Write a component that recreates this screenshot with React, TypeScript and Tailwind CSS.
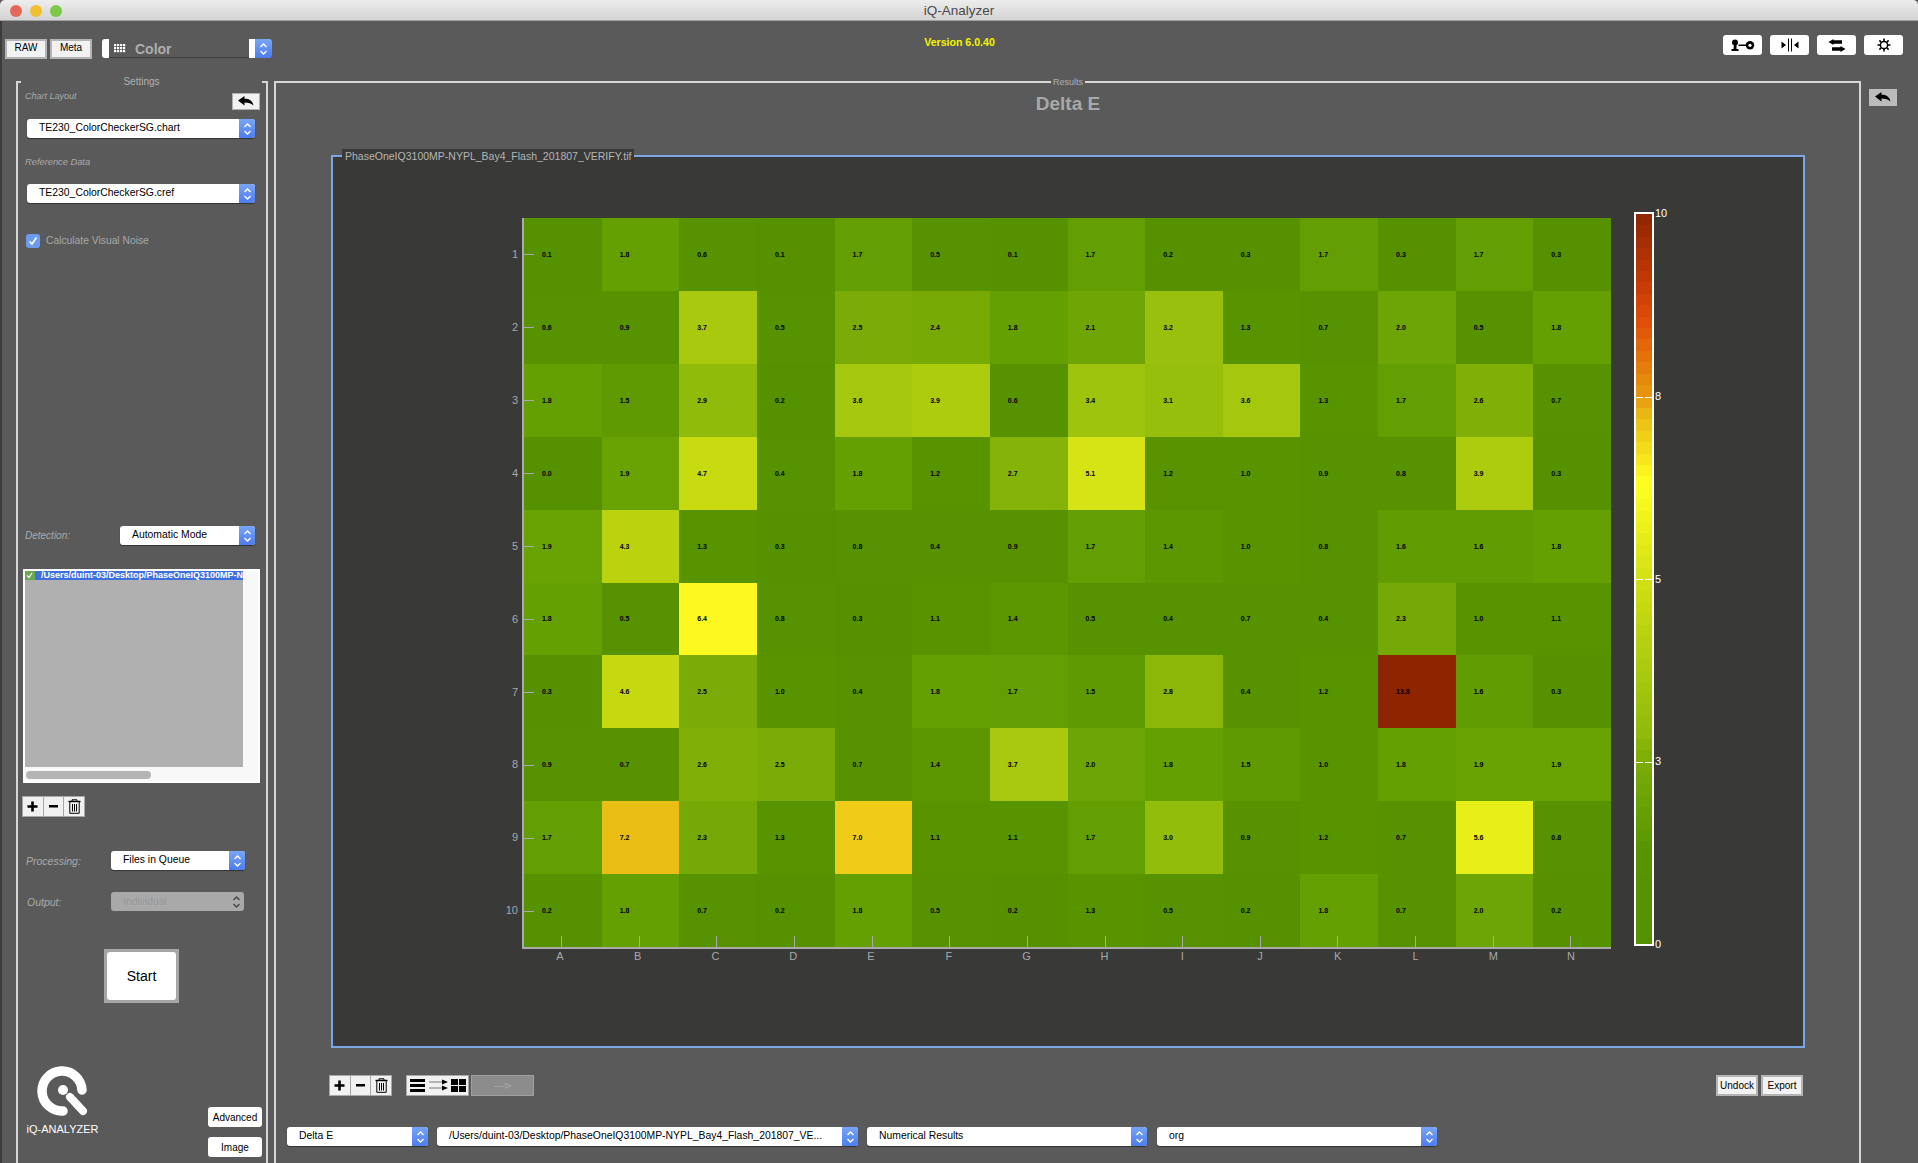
import type { ReactNode } from "react"

const COLS = ["A", "B", "C", "D", "E", "F", "G", "H", "I", "J", "K", "L", "M", "N"]

const DATA = [
  [0.1, 1.8, 0.6, 0.1, 1.7, 0.5, 0.1, 1.7, 0.2, 0.3, 1.7, 0.3, 1.7, 0.3],
  [0.6, 0.9, 3.7, 0.5, 2.5, 2.4, 1.8, 2.1, 3.2, 1.3, 0.7, 2.0, 0.5, 1.8],
  [1.8, 1.5, 2.9, 0.2, 3.6, 3.9, 0.6, 3.4, 3.1, 3.6, 1.3, 1.7, 2.6, 0.7],
  [0.0, 1.9, 4.7, 0.4, 1.8, 1.2, 2.7, 5.1, 1.2, 1.0, 0.9, 0.8, 3.9, 0.3],
  [1.9, 4.3, 1.3, 0.3, 0.8, 0.4, 0.9, 1.7, 1.4, 1.0, 0.8, 1.6, 1.6, 1.8],
  [1.8, 0.5, 6.4, 0.8, 0.3, 1.1, 1.4, 0.5, 0.4, 0.7, 0.4, 2.3, 1.0, 1.1],
  [0.3, 4.6, 2.5, 1.0, 0.4, 1.8, 1.7, 1.5, 2.8, 0.4, 1.2, 13.8, 1.6, 0.3],
  [0.9, 0.7, 2.6, 2.5, 0.7, 1.4, 3.7, 2.0, 1.8, 1.5, 1.0, 1.8, 1.9, 1.9],
  [1.7, 7.2, 2.3, 1.3, 7.0, 1.1, 1.1, 1.7, 3.0, 0.9, 1.2, 0.7, 5.6, 0.8],
  [0.2, 1.8, 0.7, 0.2, 1.8, 0.5, 0.2, 1.3, 0.5, 0.2, 1.8, 0.7, 2.0, 0.2],
]

const STOPS: [number, number, number, number][] = [
  [0, 0x56, 0x92, 0x00],
  [1.3, 0x58, 0x94, 0x00],
  [1.5, 0x5f, 0x9a, 0x02],
  [1.8, 0x65, 0xa0, 0x02],
  [2.0, 0x6c, 0xa5, 0x05],
  [2.5, 0x7b, 0xab, 0x06],
  [2.9, 0x90, 0xbb, 0x0a],
  [3.7, 0xa8, 0xc9, 0x0e],
  [4.7, 0xc8, 0xda, 0x10],
  [5.6, 0xe7, 0xee, 0x18],
  [6.3, 0xff, 0xff, 0x20],
  [7.2, 0xeb, 0xbe, 0x14],
  [7.5, 0xe7, 0x9a, 0x0f],
  [8.5, 0xe0, 0x50, 0x08],
  [9, 0xc8, 0x3c, 0x04],
  [10, 0x8f, 0x25, 0x00],
]

// same ramp for the cells and the legend
function heatColor(v: number) {
  const val = Math.min(v, 10)
  for (let i = 1; i < STOPS.length; i++) {
    const a = STOPS[i - 1]
    const b = STOPS[i]
    if (val <= b[0]) {
      const t = (val - a[0]) / (b[0] - a[0])
      const mix = (k: number) => Math.round(a[k] + (b[k] - a[k]) * t)
      return `rgb(${mix(1)},${mix(2)},${mix(3)})`
    }
  }
  return "rgb(143,37,0)"
}

const BANDS = Array.from({ length: 64 }, (_, i) => 10 - (i + 0.5) * (10 / 64))

function Chevrons({ color = "white" }: { color?: string }) {
  return (
    <svg width="9" height="14" viewBox="0 0 9 14" fill="none" stroke={color} strokeWidth="1.4">
      <path d="M1.5 5 L4.5 2 L7.5 5" />
      <path d="M1.5 9 L4.5 12 L7.5 9" />
    </svg>
  )
}

function Select({ label, className }: { label: string; className: string }) {
  return (
    <div className={`flex h-[19px] items-stretch rounded-[3px] bg-white shadow-[0_1px_1px_#333] ${className}`}>
      <div className="min-w-0 flex-1 whitespace-nowrap pl-3 text-[10.4px] leading-[17px] text-black">{label}</div>
      <div className="flex w-[16px] shrink-0 items-center justify-center rounded-r-[3px] bg-gradient-to-b from-[#79a5f7] to-[#4c7cf0]">
        <Chevrons />
      </div>
    </div>
  )
}

function BackArrow({ className }: { className: string }) {
  return (
    <div className={`flex items-center justify-center ${className}`}>
      <svg width="16" height="11" viewBox="0 0 16 11" fill="black">
        <path d="M0 4.5 L6.5 0 L6.5 2.8 C11 2.8 14.5 4.5 15.5 9.5 C13.5 7.2 10.5 6.4 6.5 6.4 L6.5 9.5 Z" />
      </svg>
    </div>
  )
}

function TrashIcon() {
  return (
    <svg width="13" height="15" viewBox="0 0 13 15" fill="none" stroke="black" strokeWidth="1">
      <path d="M4 2 V0.8 H9 V2" />
      <path d="M0.5 2.5 H12.5" strokeWidth="1.4" />
      <path d="M1.8 3 V14.3 H11.2 V3" />
      <path d="M4.5 5 V12.5 M6.5 5 V12.5 M8.5 5 V12.5" />
    </svg>
  )
}

function EditGroup() {
  const cell = "flex w-[20px] items-center justify-center bg-[#f1f1f1] text-black"
  return (
    <div className="flex h-[21px] w-[63px] gap-[1px] border border-[#a8a8a8] bg-[#a8a8a8]">
      <div className={cell}>
        <svg width="11" height="11" viewBox="0 0 11 11" fill="black">
          <path d="M4.2 0.5 H6.8 V4.2 H10.5 V6.8 H6.8 V10.5 H4.2 V6.8 H0.5 V4.2 H4.2 Z" />
        </svg>
      </div>
      <div className={cell}>
        <svg width="9" height="3" viewBox="0 0 9 3" fill="black">
          <rect width="9" height="2.5" />
        </svg>
      </div>
      <div className={cell}>
        <TrashIcon />
      </div>
    </div>
  )
}

function TopButton({ children }: { children: ReactNode }) {
  return <div className="flex h-[20px] w-[39px] items-center justify-center rounded-[3px] bg-white">{children}</div>
}

function SmallButton({ label, className }: { label: string; className: string }) {
  return (
    <div className={`flex items-center justify-center border-2 border-[#b4b4b4] bg-[#f2f2f2] text-[10px] text-black ${className}`}>
      {label}
    </div>
  )
}

function Sidebar() {
  const label = "italic leading-[14px] text-[#aaaaaa]"
  return (
    <div className="relative h-[1082px] w-[252px] shrink-0 border-x-2 border-t-2 border-[#d6d6d6]">
      <div className="absolute -top-[8px] left-[3px] w-[241px] bg-[#5a5a5a] text-center text-[10px] leading-[14px] text-[#b0b0b0]">
        Settings
      </div>

      <div className="flex items-start justify-between pl-[7px] pr-[6px] pt-[10px]">
        <div className={`${label} -mt-[4px] text-[9px]`}>Chart Layout</div>
        <BackArrow className="h-[17px] w-[28px] border border-[#b0b0b0] bg-[#f2f2f2]" />
      </div>
      <Select label="TE230_ColorCheckerSG.chart" className="ml-[9px] mt-[9px] w-[228px]" />

      <div className={`${label} ml-[7px] mt-[17px] text-[9.3px]`}>Reference Data</div>
      <Select label="TE230_ColorCheckerSG.cref" className="ml-[9px] mt-[15px] w-[228px]" />

      <div className="ml-[8px] mt-[30px] flex items-center gap-[6px]">
        <div className="flex h-[14px] w-[14px] items-center justify-center rounded-[3px] bg-[#6c9cf0]">
          <svg width="10" height="10" viewBox="0 0 10 10" fill="none" stroke="white" strokeWidth="1.6">
            <path d="M1.5 5.5 L4 8 L8.5 1.5" />
          </svg>
        </div>
        <div className="text-[10.3px] text-[#a8a8a8]">Calculate Visual Noise</div>
      </div>

      <div className="ml-[7px] mt-[278px] flex items-center">
        <div className={`${label} w-[95px] text-[10px]`}>Detection:</div>
        <Select label="Automatic Mode" className="w-[135px]" />
      </div>

      {/* file queue */}
      <div className="ml-[5px] mt-[24px] h-[214px] w-[237px] border-2 border-white bg-[#f8f8f8]">
        <div className="h-[196px] w-[218px] overflow-hidden bg-[#b0b0b0]">
          <div className="flex h-[9px] items-center bg-[#3f6fdc]">
            <div className="flex h-[9px] w-[10px] items-center justify-center bg-[#6aa84f]">
              <svg width="7" height="7" viewBox="0 0 7 7" fill="none" stroke="white" strokeWidth="1.2">
                <path d="M1 3.5 L3 5.5 L6 1" />
              </svg>
            </div>
            <div className="ml-[6px] whitespace-nowrap text-[9px] font-bold leading-[9px] text-white">
              /Users/duint-03/Desktop/PhaseOneIQ3100MP-N
            </div>
          </div>
        </div>
        <div className="ml-[1px] mt-[4px] h-[8px] w-[125px] rounded-full bg-[#b4b4b4]" />
      </div>

      <div className="ml-[4px] mt-[13px]">
        <EditGroup />
      </div>

      <div className="ml-[8px] mt-[34px] flex items-center">
        <div className={`${label} w-[85px] text-[10.5px]`}>Processing:</div>
        <Select label="Files in Queue" className="w-[134px]" />
      </div>
      <div className="ml-[9px] mt-[22px] flex items-center">
        <div className={`${label} w-[84px] text-[10.5px]`}>Output:</div>
        <div className="flex h-[19px] w-[133px] items-center justify-between rounded-[3px] bg-[#a9a9a9] pl-3 pr-[3px] text-[10.4px] text-[#989898]">
          Individual
          <Chevrons color="#444444" />
        </div>
      </div>

      <div className="ml-[86px] mt-[38px] flex h-[54px] w-[75px] items-center justify-center border-[3px] border-[#a6a6a6] bg-[#a6a6a6]">
        <div className="flex h-full w-full items-center justify-center rounded-[3px] bg-white text-[14px] text-black">Start</div>
      </div>

      <div className="mt-[63px] flex h-[91px] items-end justify-between pl-[9px] pr-[4px]">
        <div className="flex w-[71px] flex-col items-center pb-[21px]">
          <svg width="52" height="52" viewBox="0 0 52 52" fill="none" stroke="white" strokeLinecap="round">
            <path d="M45 25 A20 20 0 1 0 26 46" strokeWidth="9.5" />
            <circle cx="26" cy="25" r="5" fill="white" stroke="none" />
            <path d="M33 32 L46 46" strokeWidth="8" />
          </svg>
          <div className="mt-[5px] whitespace-nowrap text-[11px] leading-[14px] text-white">iQ-ANALYZER</div>
        </div>
        <div className="flex flex-col gap-[10px]">
          <div className="flex h-[20px] w-[54px] items-center justify-center rounded-[3px] bg-white text-[10px] text-black">Advanced</div>
          <div className="flex h-[20px] w-[54px] items-center justify-center rounded-[3px] bg-white text-[10px] text-black">Image</div>
        </div>
      </div>
    </div>
  )
}

function ColorBar() {
  const ticks = ["top-1/4", "top-1/2", "top-3/4"]
  return (
    <div className="-mt-[6px] ml-[23px] flex h-[734px]">
      <div className="relative h-full w-[20px] border-2 border-white">
        <div className="flex h-full flex-col">
          {BANDS.map((v) => (
            <div key={v} className="flex-1" style={{ backgroundColor: heatColor(v) }} />
          ))}
        </div>
        {ticks.map((t) => (
          <div key={t} className={`absolute inset-x-0 h-[1px] ${t}`}>
            <div className="flex justify-between">
              <div className="h-[1px] w-[7px] bg-white" />
              <div className="h-[1px] w-[7px] bg-white" />
            </div>
          </div>
        ))}
      </div>
      <div className="-my-[4px] ml-[1px] flex flex-col justify-between text-[11px] leading-[11px] text-white">
        <div>10</div>
        <div>8</div>
        <div>5</div>
        <div>3</div>
        <div>0</div>
      </div>
    </div>
  )
}

function HeatMap() {
  return (
    <div className="flex pl-[149px] pt-[61px]">
      <div className="grid h-[729px] w-[40px] grid-rows-[repeat(10,1fr)] pr-[4px] text-right text-[11px] text-[#a8a8a8]">
        {DATA.map((_, r) => (
          <div key={r} className="flex items-center justify-end">
            {r + 1}
          </div>
        ))}
      </div>
      <div>
        <div className="grid h-[731px] w-[1089px] grid-cols-[repeat(14,1fr)] grid-rows-[repeat(10,1fr)] border-b-2 border-l-2 border-[#aaaaaa]">
          {DATA.map((row, r) =>
            row.map((v, c) => (
              <div
                key={`${r}-${c}`}
                className="relative flex items-center pl-[18px] text-[7px] font-bold leading-none text-black"
                style={{ backgroundColor: heatColor(v) }}
              >
                {v.toFixed(1)}
                {c === 0 && <div className="absolute left-0 top-1/2 h-[1px] w-[10px] bg-[#aaaaaa]" />}
                {r === 9 && <div className="absolute bottom-0 left-[37px] h-[11px] w-[1px] bg-[#aaaaaa]" />}
              </div>
            ))
          )}
        </div>
        <div className="grid w-[1089px] grid-cols-[repeat(14,1fr)] text-center text-[11px] leading-[14px] text-[#a8a8a8]">
          {COLS.map((c) => (
            <div key={c} className="pr-[2px]">
              {c}
            </div>
          ))}
        </div>
      </div>
      <ColorBar />
    </div>
  )
}

function MainPanel() {
  return (
    <div className="relative ml-[6px] h-[1082px] w-[1587px] shrink-0 border-x-2 border-t-2 border-[#d6d6d6]">
      <div className="absolute -top-[8px] left-[775px] bg-[#5a5a5a] px-[2px] text-[9px] leading-[14px] text-[#b0b0b0]">Results</div>

      <div className="ml-[55px] w-[1474px] pt-[9px] text-center text-[19px] font-bold leading-[24px] text-[#a9a9a9]">Delta E</div>

      <div className="relative ml-[55px] mt-[39px] h-[893px] w-[1474px] border-2 border-[#7ba7e2] bg-[#393938]">
        <div className="absolute -top-[8px] left-[9px] bg-[#393938] px-[3px] text-[10.5px] leading-[14px] text-[#b5b5b5]">
          PhaseOneIQ3100MP-NYPL_Bay4_Flash_201807_VERIFY.tif
        </div>
        <HeatMap />
      </div>

      <div className="mt-[27px] flex h-[21px] pl-[53px] pr-[56px]">
        <EditGroup />
        <div className="ml-[14px] flex h-[21px] w-[63px] items-center justify-center gap-[2px] border border-[#a8a8a8] bg-[#f1f1f1]">
          <svg width="58" height="15" viewBox="0 0 58 15" fill="black">
            <rect x="1" y="1" width="15" height="3" />
            <rect x="1" y="6" width="15" height="3" />
            <rect x="1" y="11" width="15" height="3" />
            <path d="M20 3.7 H33 V1.5 L39 4 L33 6.5 V4.3 H20 Z" />
            <path d="M20 9.7 H33 V7.5 L39 10 L33 12.5 V10.3 H20 Z" />
            <rect x="42" y="1" width="7" height="6" />
            <rect x="50" y="1" width="7" height="6" />
            <rect x="42" y="8" width="7" height="6" />
            <rect x="50" y="8" width="7" height="6" />
          </svg>
        </div>
        <div className="ml-[2px] flex h-[21px] w-[63px] items-center justify-center border border-[#a0a0a0] bg-[#8c8c8c] text-[10px] text-[#a8a8a8]">
          —⊳
        </div>
        <SmallButton label="Undock" className="ml-auto h-[21px] w-[42px]" />
        <SmallButton label="Export" className="ml-[3px] h-[21px] w-[42px]" />
      </div>

      <div className="mt-[31px] flex gap-[9px] pl-[11px]">
        <Select label="Delta E" className="w-[141px]" />
        <Select label="/Users/duint-03/Desktop/PhaseOneIQ3100MP-NYPL_Bay4_Flash_201807_VE..." className="w-[421px]" />
        <Select label="Numerical Results" className="w-[280px]" />
        <Select label="org" className="ml-[1px] w-[280px]" />
      </div>
    </div>
  )
}

export default function App() {
  return (
    <div className="flex h-[1163px] w-[1918px] flex-col overflow-hidden bg-[#5a5a5a] font-['Liberation_Sans',Arial,sans-serif]">
      {/* title bar */}
      <div className="relative flex h-[21px] shrink-0 items-center justify-center rounded-t-[5px] border-b border-[#a0a0a0] bg-gradient-to-b from-[#ededed] to-[#d3d3d3] pt-[2px] text-[13.5px] text-[#4a4a4a]">
        <div className="absolute left-[10px] top-[5px] flex gap-[8px]">
          <div className="h-[12px] w-[12px] rounded-full bg-[#e5675a]" />
          <div className="h-[12px] w-[12px] rounded-full bg-[#f0c030]" />
          <div className="h-[12px] w-[12px] rounded-full bg-[#7bc944]" />
        </div>
        iQ-Analyzer
      </div>

      <div className="flex min-h-0 flex-1 flex-col border-l-2 border-[#3c3c3c]">
        {/* toolbar */}
        <div className="grid h-[60px] shrink-0 grid-cols-3">
          <div className="flex items-start pl-[3px] pt-[18px]">
            <SmallButton label="RAW" className="h-[20px] w-[42px] pb-[3px]" />
            <SmallButton label="Meta" className="ml-[3px] h-[20px] w-[42px] pb-[3px]" />
            <div className="ml-[10px] flex h-[19px] w-[170px]">
              <div className="w-[7px] rounded-l-[3px] bg-white" />
              <div className="flex w-[140px] items-center border-b border-[#3c3c3c] pl-[5px] pt-[2px] text-[14px] font-bold text-[#aeaeae]">
                <svg width="13" height="10" viewBox="0 0 13 10" fill="white">
                  {[0, 3, 6].map((y) =>
                    [0, 3, 6, 9].map((x) => <rect key={`${x}-${y}`} x={x} y={y} width="2.2" height="2.2" />)
                  )}
                </svg>
                <span className="ml-[8px]">Color</span>
              </div>
              <div className="w-[6px] bg-white" />
              <div className="flex w-[17px] items-center justify-center rounded-r-[3px] bg-gradient-to-b from-[#79a5f7] to-[#4c7cf0]">
                <Chevrons />
              </div>
            </div>
          </div>
          <div className="pr-[1px] pt-[15px] text-center text-[10.6px] font-bold leading-[13px] text-[#f5f500]">Version 6.0.40</div>
          <div className="flex items-start justify-end gap-[8px] pr-[15px] pt-[14px]">
            <TopButton>
              <svg width="24" height="13" viewBox="0 0 24 13" fill="black">
                <circle cx="4" cy="3.5" r="3" />
                <path d="M3 5 H5.5 V10 H7.5 V12 H0.5 V10 H2.5 Z" />
                <rect x="7.5" y="5.5" width="8" height="1.5" />
                <circle cx="19" cy="6.3" r="4.2" />
                <circle cx="19" cy="6.3" r="1.6" fill="white" />
              </svg>
            </TopButton>
            <TopButton>
              <svg width="18" height="14" viewBox="0 0 18 14" fill="black">
                <path d="M0.5 3.5 L5 7 L0.5 10.5 Z" />
                <rect x="7" y="0.5" width="1" height="13" />
                <rect x="10" y="0.5" width="1" height="13" />
                <path d="M17.5 3.5 L13 7 L17.5 10.5 Z" />
              </svg>
            </TopButton>
            <TopButton>
              <svg width="18" height="13" viewBox="0 0 18 13" fill="black">
                <path d="M0.5 3 L5.5 0 V1.2 H14 V4.8 H5.5 V6 Z" />
                <path d="M17.5 10 L12.5 7 V8.2 H4 V11.8 H12.5 V13 Z" />
              </svg>
            </TopButton>
            <TopButton>
              <svg width="14" height="14" viewBox="0 0 14 14" fill="none" stroke="black">
                <circle cx="7" cy="7" r="3.6" strokeWidth="1.5" />
                <path d="M7 0.5 V3 M7 11 V13.5 M0.5 7 H3 M11 7 H13.5 M2.4 2.4 L4.2 4.2 M9.8 9.8 L11.6 11.6 M11.6 2.4 L9.8 4.2 M4.2 9.8 L2.4 11.6" strokeWidth="1.6" />
              </svg>
            </TopButton>
          </div>
        </div>

        <div className="flex min-h-0 flex-1 pl-[14px]">
          <Sidebar />
          <MainPanel />
          <BackArrow className="ml-[8px] mt-[8px] h-[17px] w-[28px] bg-[#bcbcbc]" />
        </div>
      </div>
    </div>
  )
}
